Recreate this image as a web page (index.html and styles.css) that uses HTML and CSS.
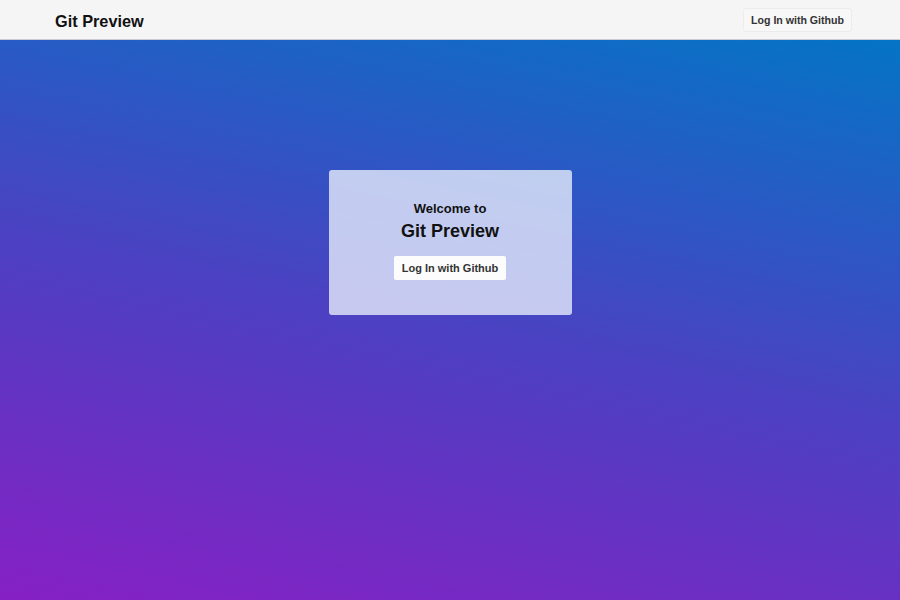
FILE: index.html
```html
<!DOCTYPE html>
<html>
<head>
<meta charset="utf-8">
<link rel="stylesheet" href="styles.css">
</head>
<body>
<header class="topbar">
  <div class="brand">Git Preview</div>
  <button class="btn btn-top">Log In with Github</button>
</header>
<main class="hero">
  <div class="card">
    <div class="welcome">Welcome to</div>
    <div class="title">Git Preview</div>
    <button class="btn btn-card">Log In with Github</button>
  </div>
</main>
</body>
</html>
```
FILE: styles.css
```css
html, body { margin: 0; padding: 0; height: 100%; }
body {
  font-family: "Liberation Sans", Arial, sans-serif;
  display: flex;
  flex-direction: column;
  background: #f5f5f5;
}
.topbar {
  height: 40px;
  flex: none;
  box-sizing: border-box;
  background: #f5f5f5;
  border-bottom: 1px solid #c9ccd2;
  display: flex;
  align-items: center;
  justify-content: space-between;
  padding: 3px 48px 0 55px;
}
.brand {
  font-size: 16.3px;
  font-weight: bold;
  color: #111;
}
.btn {
  font-family: "Liberation Sans", Arial, sans-serif;
  font-weight: bold;
  color: #333;
  border: none;
  cursor: pointer;
}
.btn-top {
  font-size: 10.6px;
  padding: 0 7px;
  height: 24px;
  background: #f7f7f7;
  border: 1px solid #ececec;
  border-radius: 3px;
  margin-top: -3px;
}
.hero {
  flex: 1;
  background: linear-gradient(12deg, #8620c4 0%, #4a42c2 50%, #0474c6 100%);
  display: flex;
  justify-content: center;
  align-items: flex-start;
  padding-top: 130px;
}
.card {
  width: 243px;
  height: 145px;
  box-sizing: border-box;
  background: rgba(235, 240, 252, 0.78);
  border-radius: 3px;
  display: flex;
  flex-direction: column;
  align-items: center;
  padding-top: 31px;
}
.welcome {
  font-size: 13px;
  font-weight: bold;
  color: #111;
  line-height: 16px;
}
.title {
  font-size: 18px;
  font-weight: bold;
  color: #111;
  line-height: 22px;
  margin-top: 3px;
}
.btn-card {
  margin-top: 14px;
  font-size: 11px;
  background: #fcfcfc;
  height: 24px;
  padding: 0 8px;
  border-radius: 2px;
}
```
